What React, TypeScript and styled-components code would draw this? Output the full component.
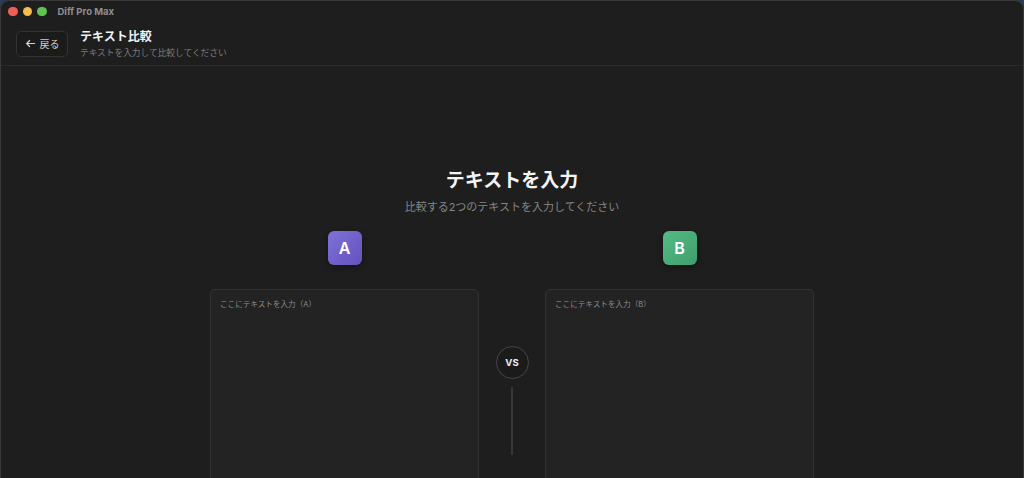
import styled, { createGlobalStyle } from "styled-components";

const GlobalStyle = createGlobalStyle`
  html, body {
    margin: 0;
    padding: 0;
    background: #2b3a55;
  }
  body {
    font-family: "Inter", "Noto Sans CJK JP", sans-serif;
    -webkit-font-smoothing: antialiased;
  }
`;

function App() {
  return (
    <>
      <GlobalStyle />
      <Window>
        <TitleBar>
          <Lights>
            <Light color="#ee5f57" />
            <Light color="#f4bd4f" />
            <Light color="#5fc454" />
          </Lights>
          <AppName>Diff Pro Max</AppName>
        </TitleBar>

        <Header>
          <BackButton>
            <ArrowIcon viewBox="0 0 12 12">
              <path d="M10.5 6H1.8M5 2.7L1.8 6 5 9.3" />
            </ArrowIcon>
            戻る
          </BackButton>
          <HeaderText>
            <HeaderTitle>テキスト比較</HeaderTitle>
            <HeaderSub>テキストを入力して比較してください</HeaderSub>
          </HeaderText>
        </Header>

        <Main>
          <Title>テキストを入力</Title>
          <Subtitle>比較する2つのテキストを入力してください</Subtitle>

          <Grid>
            <BadgeCell>
              <Badge variant="a">A</Badge>
            </BadgeCell>
            <div />
            <BadgeCell>
              <Badge variant="b">B</Badge>
            </BadgeCell>

            <Panel placeholder="ここにテキストを入力（A）" />
            <VsColumn>
              <VsCircle>VS</VsCircle>
              <VsLine />
            </VsColumn>
            <Panel placeholder="ここにテキストを入力（B）" />
          </Grid>
        </Main>
      </Window>
    </>
  );
}

export default App;

const Window = styled.div`
  height: 478px;
  overflow: hidden;
  background: #1e1e1e;
  border: 1px solid #3a3a3a;
  border-bottom: none;
  border-radius: 9px 9px 0 0;
  box-sizing: border-box;
  display: flex;
  flex-direction: column;
`;

const TitleBar = styled.div`
  flex-shrink: 0;
  height: 21px;
  display: flex;
  align-items: center;
  padding-left: 7px;
  gap: 11px;
`;

const Lights = styled.div`
  display: flex;
  gap: 5px;
`;

const Light = styled.span<{ color: string }>`
  width: 9.5px;
  height: 9.5px;
  border-radius: 50%;
  background: ${({ color }) => color};
`;

const AppName = styled.div`
  font-size: 9.5px;
  font-weight: 700;
  color: #8e8e8e;
`;

const Header = styled.div`
  flex-shrink: 0;
  height: 43px;
  display: flex;
  align-items: center;
  gap: 12px;
  padding: 0 15px;
  border-bottom: 1px solid #2c2c2c;
`;

const BackButton = styled.div`
  width: 52px;
  height: 26px;
  box-sizing: border-box;
  border: 1px solid #333;
  border-radius: 5px;
  background: #1b1b1b;
  display: flex;
  align-items: center;
  justify-content: center;
  gap: 4px;
  font-size: 10px;
  color: #cfcfcf;
`;

const ArrowIcon = styled.svg`
  width: 11px;
  height: 11px;
  fill: none;
  stroke: #d0d0d0;
  stroke-width: 1.3;
  stroke-linecap: round;
  stroke-linejoin: round;
`;

const HeaderText = styled.div`
  display: flex;
  flex-direction: column;
  gap: 2px;
`;

const HeaderTitle = styled.div`
  font-size: 12px;
  font-weight: 700;
  color: #f2f2f2;
  line-height: 16px;
`;

const HeaderSub = styled.div`
  font-size: 8.7px;
  color: #7a7a7a;
  line-height: 12px;
`;

const Main = styled.div`
  flex: 1;
  min-height: 0;
  display: flex;
  flex-direction: column;
  align-items: center;
  padding-top: 102px;
`;

const Title = styled.h1`
  margin: 0;
  font-size: 19px;
  font-weight: 700;
  color: #f4f4f4;
  line-height: 26px;
`;

const Subtitle = styled.p`
  margin: 5px 0 0;
  font-size: 11px;
  color: #858585;
  line-height: 16px;
`;

const Grid = styled.div`
  margin-top: 16px;
  display: grid;
  grid-template-columns: 269px 66px 269px;
  row-gap: 24px;
`;

const BadgeCell = styled.div`
  display: flex;
  justify-content: center;
`;

const Badge = styled.div<{ variant: "a" | "b" }>`
  width: 34px;
  height: 34px;
  border-radius: 6px;
  display: flex;
  align-items: center;
  justify-content: center;
  font-size: 16px;
  font-weight: 600;
  color: #fff;
  background: ${({ variant }) =>
    variant === "a"
      ? "linear-gradient(135deg, #7d72d8 0%, #6651bd 100%)"
      : "linear-gradient(135deg, #55bb86 0%, #3f9f6d 100%)"};
  box-shadow: 0 2px 6px rgba(0, 0, 0, 0.35);
`;

const Panel = styled.textarea`
  height: 300px;
  box-sizing: border-box;
  resize: none;
  background: #232323;
  border: 1px solid #323232;
  border-radius: 5px;
  padding: 8px 9px;
  font-family: "Inter", "Noto Sans CJK JP", sans-serif;
  font-size: 7.6px;
  color: #ddd;
  outline: none;

  &::placeholder {
    color: #8a8a8a;
  }
`;

const VsColumn = styled.div`
  display: flex;
  flex-direction: column;
  align-items: center;
  padding-top: 57px;
  gap: 8px;
`;

const VsCircle = styled.div`
  width: 33px;
  height: 33px;
  box-sizing: border-box;
  border-radius: 50%;
  border: 1.5px solid #474747;
  background: #1b1b1b;
  display: flex;
  align-items: center;
  justify-content: center;
  font-size: 9.5px;
  font-weight: 700;
  color: #f0f0f0;
`;

const VsLine = styled.div`
  width: 2px;
  height: 68px;
  background: #383838;
  border-radius: 1px;
`;
